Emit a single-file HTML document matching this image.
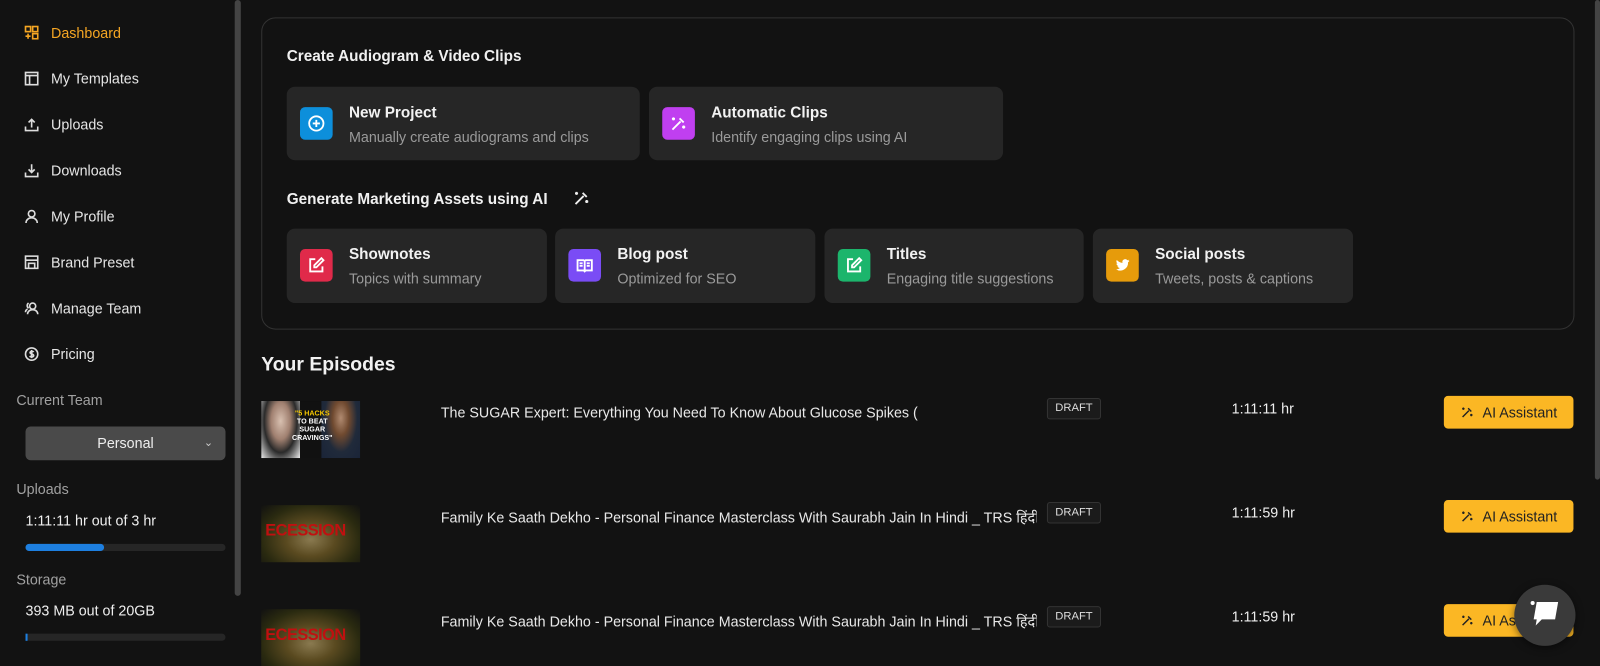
<!DOCTYPE html>
<html><head><meta charset="utf-8"><style>
*{box-sizing:border-box;margin:0;padding:0}
body{width:1600px;height:665px;background:#121212;font-family:"Liberation Sans",sans-serif;color:#e8e8e8;position:relative;overflow:hidden}
#w{position:absolute;left:0;top:0;width:1568px;height:652px;transform:scale(1.0204);transform-origin:0 0}
.abs{position:absolute}
.nav{left:24px;display:flex;align-items:center;font-size:14px;color:#e6e6e6}
.nav svg{width:14px;height:14px;margin-right:12px;stroke:#ddd;fill:none;stroke-width:1.6}
.card{background:#262626;border-radius:8px;position:absolute}
.card .ic{position:absolute;left:13px;width:32px;height:32px;border-radius:5px;display:flex;align-items:center;justify-content:center}
.card .ic svg{width:18px;height:18px;stroke:#fff;fill:none;stroke-width:1.8}
.card .t{position:absolute;left:61px;top:17px;font-size:15px;font-weight:bold;color:#f2f2f2}
.card .s{position:absolute;left:61px;top:41px;font-size:14px;color:#9a9a9a}
.h{font-size:15px;font-weight:bold;color:#f0f0f0}
.thumb{left:256px;width:97px;height:56px;overflow:hidden}
.title{left:432px;font-size:14px;color:#e8e8e8}
.draft{left:1026px;width:53px;height:21px;border:1px solid #333;background:#1b1b1b;border-radius:3px;font-size:11px;color:#ddd;text-align:center;line-height:19px}
.time{left:1207px;font-size:14px;color:#eee}
.btn{left:1415px;width:127px;height:32px;background:#fbb724;border-radius:4px;color:#222;font-size:14px;display:flex;align-items:center;justify-content:center}
.btn svg{width:14px;height:14px;margin-right:8px;stroke:#222;fill:none;stroke-width:1.8}
.rec{background:radial-gradient(ellipse at 50% 60%,#8a7a50 0,#5a4a20 35%,#2a2a10 70%,#111 100%)}
.rec div{position:absolute;left:4px;top:17px;font-size:16px;font-weight:bold;color:#c01010;letter-spacing:-0.5px}
</style></head><body><div id="w">
<!-- sidebar -->
<div class="abs nav" style="top:24px;color:#f5a623"><svg viewBox="0 0 14 14" style="stroke:#f5a623"><rect x="1" y="1" width="5" height="5"/><rect x="8" y="1" width="5" height="5"/><rect x="8" y="8" width="5" height="5"/><path d="M3.5 8v5M1 10.5h5"/></svg>Dashboard</div>
<div class="abs nav" style="top:69px"><svg viewBox="0 0 14 14"><rect x="1" y="1" width="12" height="12"/><path d="M1 4h12M5 4v9"/></svg>My Templates</div>
<div class="abs nav" style="top:114px"><svg viewBox="0 0 14 14"><path d="M1 9v4h12V9M7 10V2M4 5l3-3 3 3"/></svg>Uploads</div>
<div class="abs nav" style="top:159px"><svg viewBox="0 0 14 14"><path d="M1 9v4h12V9M7 1v8M4 6l3 3 3-3"/></svg>Downloads</div>
<div class="abs nav" style="top:204px"><svg viewBox="0 0 14 14"><circle cx="7" cy="4.5" r="3.2"/><path d="M1.5 13.5c0-3 2.5-5 5.5-5s5.5 2 5.5 5"/></svg>My Profile</div>
<div class="abs nav" style="top:249px"><svg viewBox="0 0 14 14"><rect x="1" y="1" width="12" height="12"/><path d="M1 5h12M4 13V8h6v5"/></svg>Brand Preset</div>
<div class="abs nav" style="top:294px"><svg viewBox="0 0 14 14"><circle cx="8" cy="5" r="3"/><path d="M3 13c0-2.5 2-4.5 5-4.5s5 2 5 4.5M4 2a3 3 0 0 0 0 5M1 11c0-1.5.8-2.5 2-3"/></svg>Manage Team</div>
<div class="abs nav" style="top:339px"><svg viewBox="0 0 14 14"><circle cx="7" cy="7" r="6"/><path d="M9 5c-.5-.8-3.5-1-3.5.6S9 6.7 9 8.4 6 10 5 9M7 3v8"/></svg>Pricing</div>
<div class="abs" style="left:16px;top:384px;font-size:14px;color:#a0a0a0">Current Team</div>
<div class="abs" style="left:25px;top:418px;width:196px;height:33px;background:#4a4a4a;border-radius:5px;font-size:14px;color:#eee;text-align:center;line-height:33px">Personal<span style="position:absolute;right:12px;top:0;font-size:11px;color:#ccc">&#8964;</span></div>
<div class="abs" style="left:16px;top:471px;font-size:14px;color:#a0a0a0">Uploads</div>
<div class="abs" style="left:25px;top:502px;font-size:14px;color:#eee">1:11:11 hr out of 3 hr</div>
<div class="abs" style="left:25px;top:533px;width:196px;height:7px;background:#262626;border-radius:4px"><div style="width:77px;height:7px;background:#1d7fe0;border-radius:4px"></div></div>
<div class="abs" style="left:16px;top:560px;font-size:14px;color:#a0a0a0">Storage</div>
<div class="abs" style="left:25px;top:590px;font-size:14px;color:#eee">393 MB out of 20GB</div>
<div class="abs" style="left:25px;top:621px;width:196px;height:7px;background:#262626;border-radius:4px"><div style="width:2px;height:7px;background:#1d7fe0"></div></div>
<div class="abs" style="left:230px;top:0;width:6px;height:584px;background:#444;border-radius:3px"></div>
<div class="abs" style="left:1563px;top:0;width:5px;height:470px;background:#444;border-radius:3px"></div>
<!-- main panel -->
<div class="abs" style="left:256px;top:17px;width:1287px;height:306px;border:1px solid #333;border-radius:14px"></div>
<div class="abs h" style="left:281px;top:47px">Create Audiogram &amp; Video Clips</div>
<div class="card" style="left:281px;top:85px;width:346px;height:72px"><div class="ic" style="top:20px;background:#0d8fdb"><svg viewBox="0 0 18 18"><circle cx="9" cy="9" r="7"/><path d="M9 5.5v7M5.5 9h7"/></svg></div><div class="t">New Project</div><div class="s">Manually create audiograms and clips</div></div>
<div class="card" style="left:636px;top:85px;width:347px;height:72px"><div class="ic" style="top:20px;background:#c03ff0"><svg viewBox="0 0 18 18"><path d="M3 15l8-8M10 4l4 4M4 3v3M2.5 4.5h3M14 11v3M12.5 12.5h3"/></svg></div><div class="t">Automatic Clips</div><div class="s">Identify engaging clips using AI</div></div>
<div class="abs h" style="left:281px;top:187px">Generate Marketing Assets using AI</div>
<svg class="abs" style="left:561px;top:185px;width:18px;height:18px;stroke:#eee;fill:none;stroke-width:1.8" viewBox="0 0 18 18"><path d="M3 15l8-8M10 4l4 4M4 3v3M2.5 4.5h3M14 11v3M12.5 12.5h3"/></svg>
<div class="card" style="left:281px;top:224px;width:255px;height:73px"><div class="ic" style="top:20px;background:#e02a4a"><svg viewBox="0 0 18 18"><path d="M8 3H3v12h12v-5M14 2l2 2-7 7H7V9z"/></svg></div><div class="t">Shownotes</div><div class="s">Topics with summary</div></div>
<div class="card" style="left:544px;top:224px;width:255px;height:73px"><div class="ic" style="top:20px;background:#7a4cf5"><svg viewBox="0 0 18 18"><path d="M2 4h6l1 1 1-1h6v10h-6l-1 1-1-1H2zM9 5v9M4 7h3M4 9.5h3M11 7h3M11 9.5h3"/></svg></div><div class="t">Blog post</div><div class="s">Optimized for SEO</div></div>
<div class="card" style="left:808px;top:224px;width:254px;height:73px"><div class="ic" style="top:20px;background:#1cb56c"><svg viewBox="0 0 18 18"><path d="M8 3H3v12h12v-5M14 2l2 2-7 7H7V9z"/></svg></div><div class="t">Titles</div><div class="s">Engaging title suggestions</div></div>
<div class="card" style="left:1071px;top:224px;width:255px;height:73px"><div class="ic" style="top:20px;background:#e69b0b"><svg viewBox="0 0 18 18" style="fill:#fff;stroke:none"><path d="M16 4.5c-.5.2-1 .4-1.6.4.6-.3 1-.9 1.2-1.5-.5.3-1.1.6-1.8.7a2.7 2.7 0 0 0-4.7 2.5C6.9 6.5 4.9 5.4 3.5 3.8c-.8 1.3-.3 2.9.8 3.6-.4 0-.9-.1-1.2-.3 0 1.3.9 2.4 2.2 2.7-.4.1-.8.1-1.2 0 .3 1.1 1.4 1.9 2.5 1.9A5.5 5.5 0 0 1 2.6 12.9 7.7 7.7 0 0 0 14.5 6c.6-.4 1.1-.9 1.5-1.5z"/></svg></div><div class="t">Social posts</div><div class="s">Tweets, posts &amp; captions</div></div>
<!-- episodes -->
<div class="abs" style="left:256px;top:347px;font-size:19px;font-weight:bold;color:#f2f2f2">Your Episodes</div>
<div class="abs thumb" style="top:393px;background:#111">
 <div style="position:absolute;left:0;top:0;width:38px;height:56px;background:radial-gradient(ellipse at 50% 35%,#d8c0b0 0,#a08070 35%,#2a2a2a 60%,#eee 100%)"></div>
 <div style="position:absolute;right:0;top:0;width:38px;height:56px;background:radial-gradient(ellipse at 50% 30%,#b08a70 0,#704a30 30%,#202a3a 60%,#1a2438 100%)"></div>
 <div style="position:absolute;left:28px;top:9px;width:44px;text-align:center;font-size:7px;font-weight:bold;color:#f7c900;line-height:8px">"5 HACKS<br><span style="color:#fff">TO BEAT<br>SUGAR CRAVINGS"</span></div></div>
<div class="abs thumb rec" style="top:495px"><div>ECESSION</div></div>
<div class="abs thumb rec" style="top:597px"><div>ECESSION</div></div>
<div class="abs title" style="top:396px">The SUGAR Expert: Everything You Need To Know About Glucose Spikes (</div>
<div class="abs title" style="top:498px;width:584px;white-space:nowrap;overflow:hidden">Family Ke Saath Dekho - Personal Finance Masterclass With Saurabh Jain In Hindi _ TRS हिंदी.mp4</div>
<div class="abs title" style="top:600px;width:584px;white-space:nowrap;overflow:hidden">Family Ke Saath Dekho - Personal Finance Masterclass With Saurabh Jain In Hindi _ TRS हिंदी.mp4</div>
<div class="abs draft" style="top:390px">DRAFT</div>
<div class="abs draft" style="top:492px">DRAFT</div>
<div class="abs draft" style="top:594px">DRAFT</div>
<div class="abs time" style="top:392px">1:11:11 hr</div>
<div class="abs time" style="top:494px">1:11:59 hr</div>
<div class="abs time" style="top:596px">1:11:59 hr</div>
<div class="abs btn" style="top:388px"><svg viewBox="0 0 18 18"><path d="M3 15l8-8M10 4l4 4M4 3v3M2.5 4.5h3M14 11v3M12.5 12.5h3"/></svg>AI Assistant</div>
<div class="abs btn" style="top:490px"><svg viewBox="0 0 18 18"><path d="M3 15l8-8M10 4l4 4M4 3v3M2.5 4.5h3M14 11v3M12.5 12.5h3"/></svg>AI Assistant</div>
<div class="abs btn" style="top:592px"><svg viewBox="0 0 18 18"><path d="M3 15l8-8M10 4l4 4M4 3v3M2.5 4.5h3M14 11v3M12.5 12.5h3"/></svg>AI Assistant</div>
<div class="abs" style="left:1484px;top:573px;width:60px;height:60px;border-radius:50%;background:#3a3a3a;box-shadow:0 2px 8px rgba(0,0,0,.5)"></div>
<svg class="abs" style="left:1496px;top:585px;width:36px;height:36px" viewBox="0 0 36 36"><circle cx="6" cy="6" r="2" fill="#fff"/><path d="M10 5h21l-3 17H15l-6 6 1-6H7z" fill="#fff"/></svg>
</div></body></html>
